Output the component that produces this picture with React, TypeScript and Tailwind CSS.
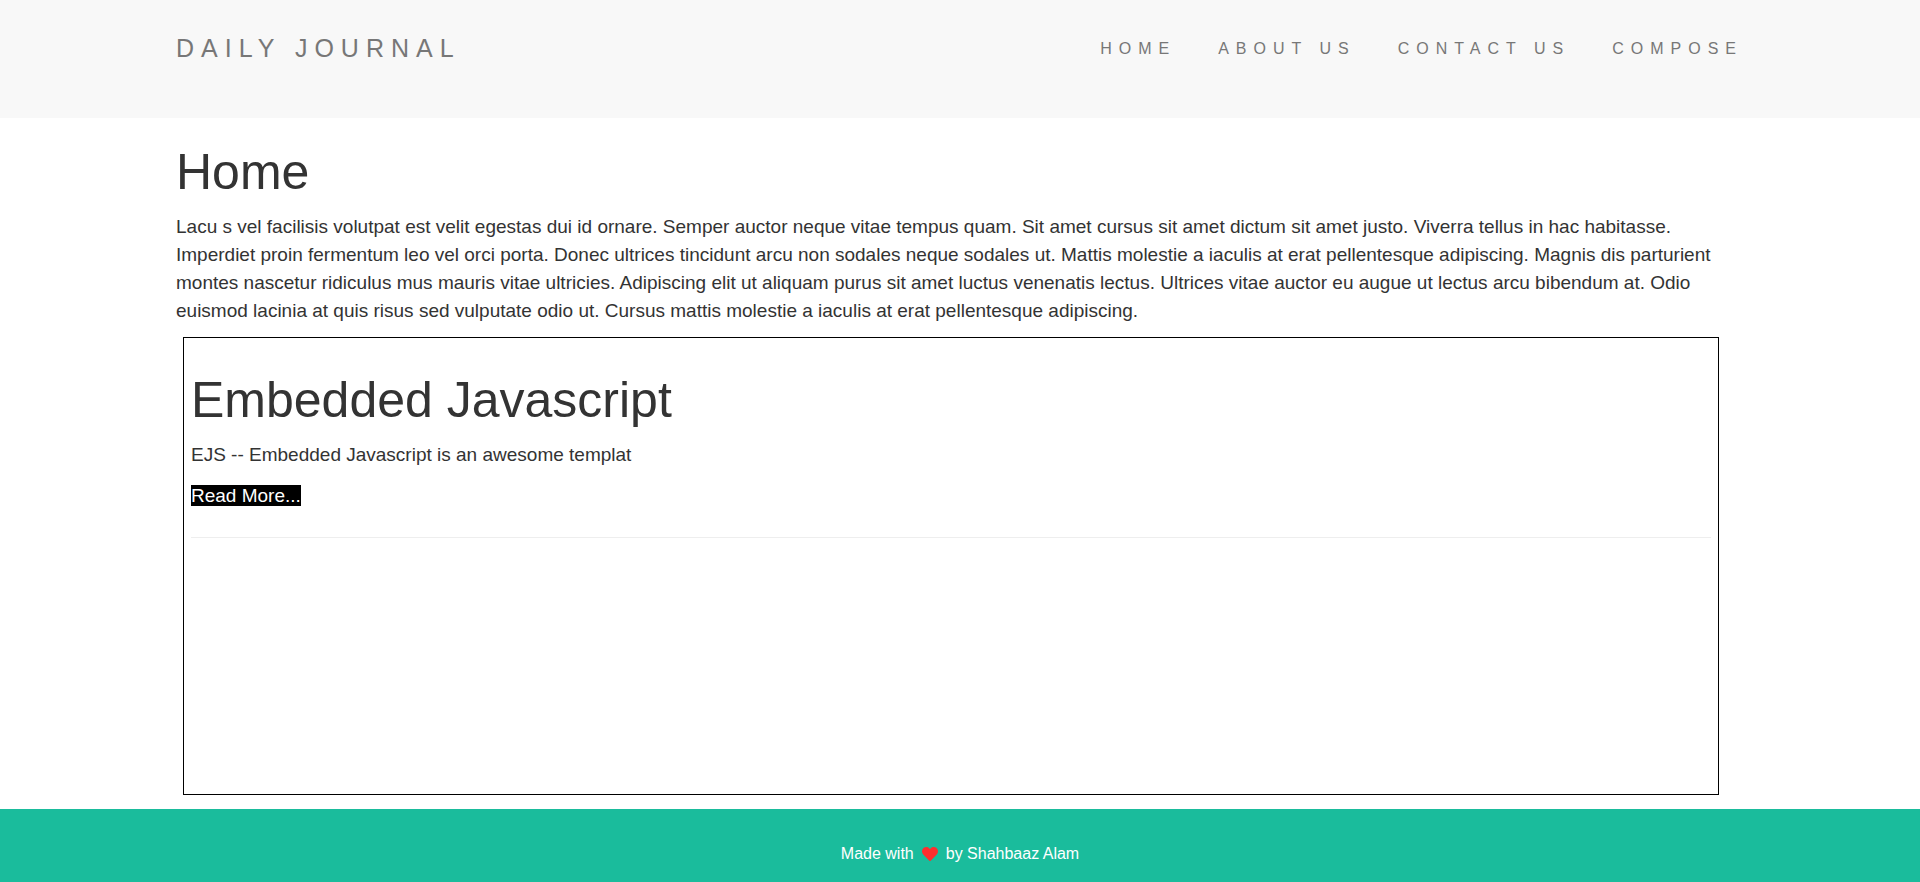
import { FaHeart } from "react-icons/fa";

const links = [
  { label: "HOME", href: "#home" },
  { label: "ABOUT US", href: "#about" },
  { label: "CONTACT US", href: "#contact" },
  { label: "COMPOSE", href: "#compose" },
];

const posts = [
  {
    title: "Embedded Javascript",
    excerpt: "EJS -- Embedded Javascript is an awesome templat",
    href: "#embedded-javascript",
  },
];

function Navbar() {
  return (
    <nav className="bg-[#f8f8f8] pt-[34px] pb-[54px] text-[#777]">
      <div className="mx-auto flex w-full max-w-[1568px] items-start justify-between">
        <a href="#home" className="text-[25px] leading-7 tracking-[7px]">
          DAILY JOURNAL
        </a>
        <ul className="-mr-5 flex text-base leading-[30px] tracking-[7px]">
          {links.map(({ label, href }) => (
            <li key={label}>
              <a href={href} className="block px-[21px]">
                {label}
              </a>
            </li>
          ))}
        </ul>
      </div>
    </nav>
  );
}

export default function App() {
  return (
    <div className="flex min-h-screen flex-col bg-white font-['Liberation_Sans',Arial,sans-serif] text-[19px] leading-7 text-[#333]">
      <Navbar />
      <main className="mx-auto w-full max-w-[1568px] flex-1">
        <h1 className="mt-6 text-[50px] leading-[60px]">Home</h1>
        <p className="mt-[11px]">
          Lacu s vel facilisis volutpat est velit egestas dui id ornare. Semper auctor neque vitae
          tempus quam. Sit amet cursus sit amet dictum sit amet justo. Viverra tellus in hac
          habitasse. Imperdiet proin fermentum leo vel orci porta. Donec ultrices tincidunt arcu non
          sodales neque sodales ut. Mattis molestie a iaculis at erat pellentesque adipiscing. Magnis
          dis parturient montes nascetur ridiculus mus mauris vitae ultricies. Adipiscing elit ut
          aliquam purus sit amet luctus venenatis lectus. Ultrices vitae auctor eu augue ut lectus
          arcu bibendum at. Odio euismod lacinia at quis risus sed vulputate odio ut. Cursus mattis
          molestie a iaculis at erat pellentesque adipiscing.
        </p>
        <section className="mt-3 mr-[25px] mb-[14px] ml-[7px] min-h-[458px] border border-black p-[7px]">
          {posts.map((post) => (
            <article key={post.title} className="border-b border-[#eee] pt-[25px] pb-[27px]">
              <h1 className="text-[50px] leading-[60px]">{post.title}</h1>
              <p className="mt-[11px]">{post.excerpt}</p>
              <p className="mt-[13px]">
                <a href={post.href} className="bg-black text-white">
                  Read More...
                </a>
              </p>
            </article>
          ))}
        </section>
      </main>
      <footer className="flex items-center justify-center gap-2 bg-[#1abc9c] pt-[31px] pb-[14px] text-base leading-7 text-white">
        <span>Made with</span>
        <FaHeart className="size-4 text-[#ff2e2e]" aria-hidden="true" />
        <span>by Shahbaaz Alam</span>
      </footer>
    </div>
  );
}
